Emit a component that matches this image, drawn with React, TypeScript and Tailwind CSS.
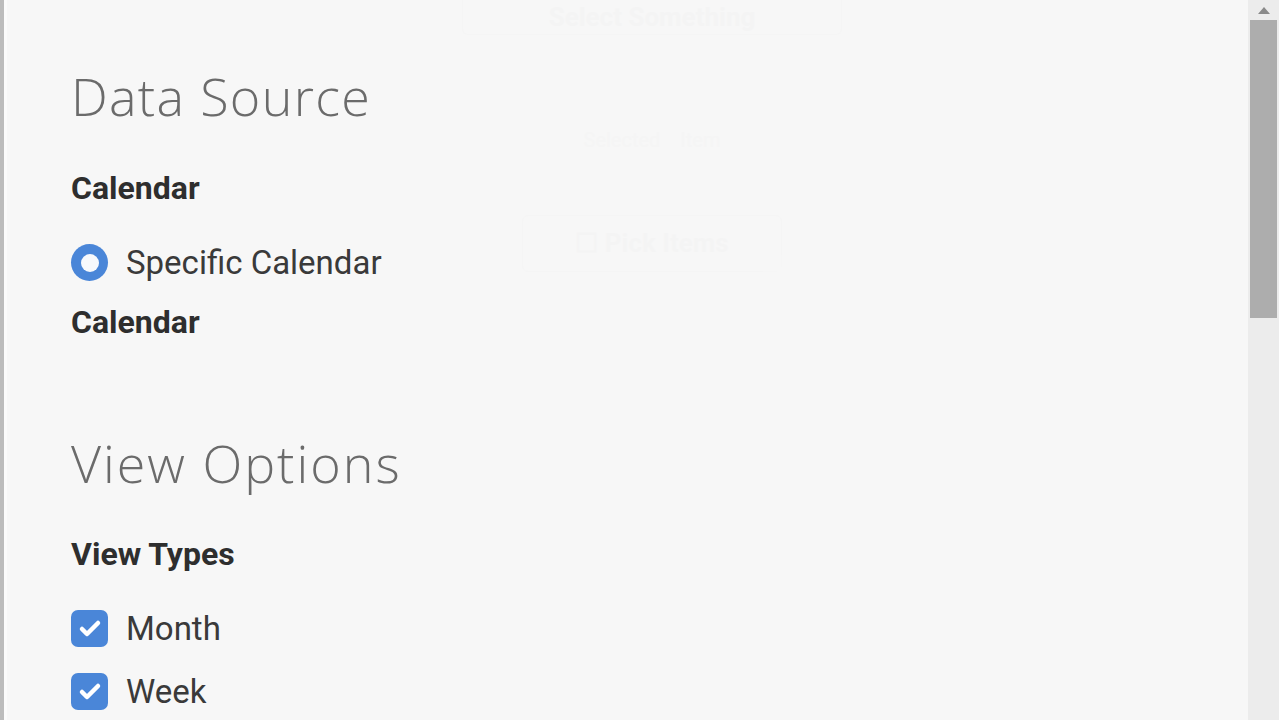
import { Check } from "lucide-react"

function Radio({ label }: { label: string }) {
  return (
    <label className="flex items-center gap-[18px]">
      <span className="flex h-[37px] w-[37px] items-center justify-center rounded-full bg-[#4a86d8]">
        <span className="h-[18px] w-[18px] rounded-full bg-[#f7f9fc]" />
      </span>
      <span className="text-[33px] leading-none text-[#3a3a3a]">{label}</span>
    </label>
  )
}

function CheckItem({ label }: { label: string }) {
  return (
    <label className="flex items-center gap-[18px]">
      <span className="flex h-[37px] w-[37px] items-center justify-center rounded-[7px] bg-[#4a86d8]">
        <Check className="h-[24px] w-[24px] text-white" strokeWidth={4.5} />
      </span>
      <span className="text-[33px] leading-none text-[#3a3a3a]">{label}</span>
    </label>
  )
}

export default function App() {
  return (
    <div className="flex h-[720px] w-full overflow-hidden bg-[#f7f7f7] font-['Roboto',sans-serif]">
      <div className="w-[4px] shrink-0 bg-[#bcbcbc]" />
      <div className="w-[3px] shrink-0 bg-[#fbfbfb]" />

      <main className="relative flex-1 pl-[64px] pt-[70px]">
        {/* faint ghost of the page behind */}
        <div className="pointer-events-none absolute left-[455px] top-0 flex w-[380px] flex-col items-center opacity-25">
          <div className="w-full rounded-b-[6px] border border-t-0 border-[#f2f2f2] py-[4px] text-center text-[26px] font-bold leading-none text-[#eeeeee]">
            Select Something
          </div>
          <div className="mt-[90px] flex gap-[20px] text-[20px] text-[#f0f0f0]">
            <span>Selected</span>
            <span>Item</span>
          </div>
          <div className="mt-[60px] w-[260px] rounded-[6px] border border-[#f2f2f2] py-[8px] text-center text-[26px] font-bold text-[#efefef]">
            ☐ Pick Items
          </div>
        </div>

        <section className="relative">
          <h2 className="font-['Open_Sans',sans-serif] text-[52px] font-light leading-none tracking-[1.3px] text-[#6b6b6b]">
            Data Source
          </h2>
          <h3 className="mt-[50px] text-[32px] font-bold leading-none text-[#2e2e2e]">
            Calendar
          </h3>
          <div className="mt-[40px]">
            <Radio label="Specific Calendar" />
          </div>
          <h3 className="mt-[25px] text-[32px] font-bold leading-none text-[#2e2e2e]">
            Calendar
          </h3>
        </section>

        <section className="relative mt-[99px]">
          <h2 className="font-['Open_Sans',sans-serif] text-[52px] font-light leading-none tracking-[2px] text-[#6b6b6b]">
            View Options
          </h2>
          <h3 className="mt-[49px] text-[32px] font-bold leading-none text-[#2e2e2e]">
            View Types
          </h3>
          <div className="mt-[40px] flex flex-col gap-[26px]">
            <CheckItem label="Month" />
            <CheckItem label="Week" />
          </div>
        </section>
      </main>

      <div className="flex w-[31px] shrink-0 flex-col bg-[#ececec]">
        <div className="flex h-[20px] items-center justify-center">
          <svg width="12" height="7" viewBox="0 0 12 7">
            <path d="M0 7 L6 0 L12 7 Z" fill="#8a8a8a" />
          </svg>
        </div>
        <div className="mx-[2px] h-[298px] bg-[#adadad]" />
      </div>
    </div>
  )
}
